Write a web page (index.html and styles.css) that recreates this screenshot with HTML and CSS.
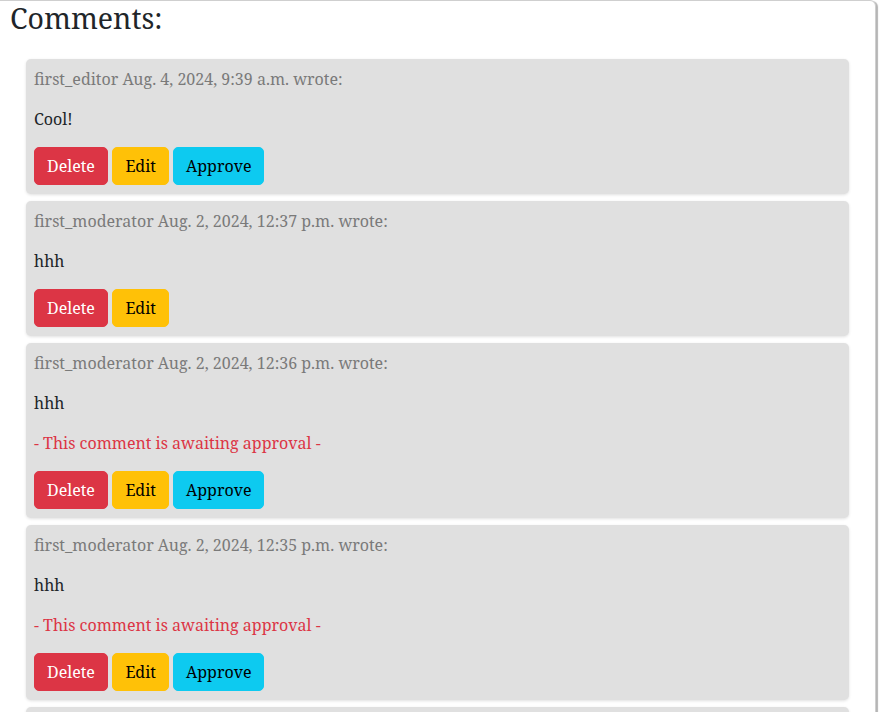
FILE: index.html
```html
<!DOCTYPE html>
<html lang="en">
<head>
<meta charset="utf-8">
<title>Comments</title>
<link rel="stylesheet" href="styles.css">
</head>
<body>
<div class="panel">
  <h2 class="title">Comments:</h2>
  <div class="comments">
    <div class="comment">
      <p class="meta">first_editor Aug. 4, 2024, 9:39 a.m. wrote:</p>
      <p class="body">Cool!</p>
      <div class="actions">
        <button class="btn btn-danger">Delete</button>
        <button class="btn btn-warning">Edit</button>
        <button class="btn btn-info">Approve</button>
      </div>
    </div>
    <div class="comment">
      <p class="meta">first_moderator Aug. 2, 2024, 12:37 p.m. wrote:</p>
      <p class="body">hhh</p>
      <div class="actions">
        <button class="btn btn-danger">Delete</button>
        <button class="btn btn-warning">Edit</button>
      </div>
    </div>
    <div class="comment">
      <p class="meta">first_moderator Aug. 2, 2024, 12:36 p.m. wrote:</p>
      <p class="body">hhh</p>
      <p class="pending">- This comment is awaiting approval -</p>
      <div class="actions">
        <button class="btn btn-danger">Delete</button>
        <button class="btn btn-warning">Edit</button>
        <button class="btn btn-info">Approve</button>
      </div>
    </div>
    <div class="comment">
      <p class="meta">first_moderator Aug. 2, 2024, 12:35 p.m. wrote:</p>
      <p class="body">hhh</p>
      <p class="pending">- This comment is awaiting approval -</p>
      <div class="actions">
        <button class="btn btn-danger">Delete</button>
        <button class="btn btn-warning">Edit</button>
        <button class="btn btn-info">Approve</button>
      </div>
    </div>
    <div class="comment comment-more"></div>
  </div>
</div>
</body>
</html>
```
FILE: styles.css
```css
html, body {
  margin: 0;
  padding: 0;
  background: #fff;
  overflow: hidden;
}
body {
  font-family: "Noto Serif", "DejaVu Serif", "Liberation Serif", serif;
  font-size: 16px;
  line-height: 24px;
  color: #212529;
}
.panel {
  box-sizing: border-box;
  width: 877px;
  margin-left: -1px;
  border: 1px solid #cfcfcf;
  border-radius: 0 6px 0 0;
  box-shadow: 2px 1px 1px #b5b5b5;
  background: #fff;
  min-height: 800px;
}
.title {
  margin: 0;
  padding-left: 10px;
  font-size: 28.5px;
  font-weight: 400;
  line-height: 34px;
  color: #212529;
}
.comments {
  display: flex;
  flex-direction: column;
  gap: 7px;
  padding: 24px 26px 0 26px;
}
.comment {
  background: #e0e0e0;
  border-radius: 5px;
  padding: 8px 8px 9px;
  box-shadow: 0 1px 3px rgba(0, 0, 0, 0.12);
}
.comment-more {
  height: 100px;
}
.comment p {
  margin: 0 0 16px;
}
.meta {
  color: #7a7a7a;
}
.pending {
  color: #dc3545;
}
.actions {
  display: flex;
  gap: 4px;
}
.btn {
  font-family: inherit;
  font-size: 16px;
  line-height: 24px;
  padding: 6px 12px;
  border: 1px solid transparent;
  border-radius: 5px;
  cursor: pointer;
}
.btn-warning {
  padding: 6px 12.5px;
}
.btn-info {
  padding: 6px 11.5px;
}
.btn-danger {
  background: #dc3545;
  border-color: #dc3545;
  color: #fff;
}
.btn-warning {
  background: #ffc107;
  border-color: #ffc107;
  color: #000;
}
.btn-info {
  background: #0dcaf0;
  border-color: #0dcaf0;
  color: #000;
}
```
